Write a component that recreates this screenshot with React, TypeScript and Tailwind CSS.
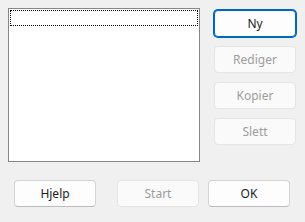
import type { ReactNode } from 'react'

function Btn({ children, disabled, primary, className = '' }: { children: ReactNode; disabled?: boolean; primary?: boolean; className?: string }) {
  const look = disabled
    ? 'bg-[#fafafa] border-[#e5e5e5] text-[#9d9d9d]'
    : primary
    ? 'bg-[#fdfdfd] border-[#0067c0] ring-1 ring-[#0067c0] text-[#1b1b1b]'
    : 'bg-[#fdfdfd] border-[#d3d3d3] border-b-[#bcbcbc] text-[#1b1b1b]'
  return (
    <div className={`w-[82px] h-[27px] flex items-center justify-center rounded-[4px] border text-[12px] ${look} ${className}`}>
      {children}
    </div>
  )
}

export default function App() {
  return (
    <div className="w-[305px] h-[222px] bg-[#f0f0f0] font-['Noto_Sans','Open_Sans',sans-serif] select-none">
      <div className="flex pt-[8px] pl-[8px]">
        {/* liste */}
        <div className="w-[192px] h-[154px] bg-white border border-[#868686] p-px">
          <div className="h-[16px] border border-dotted border-black" />
        </div>

        <div className="flex flex-col gap-[9px] ml-[14px] mt-[2px]">
          <Btn primary>Ny</Btn>
          <Btn disabled>Rediger</Btn>
          <Btn disabled>Kopier</Btn>
          <Btn disabled>Slett</Btn>
        </div>
      </div>

      <div className="flex mt-[18px] pl-[14px]">
        <Btn>Hjelp</Btn>
        <Btn disabled className="ml-[21px]">Start</Btn>
        <Btn className="ml-[9px]">OK</Btn>
      </div>
    </div>
  )
}
